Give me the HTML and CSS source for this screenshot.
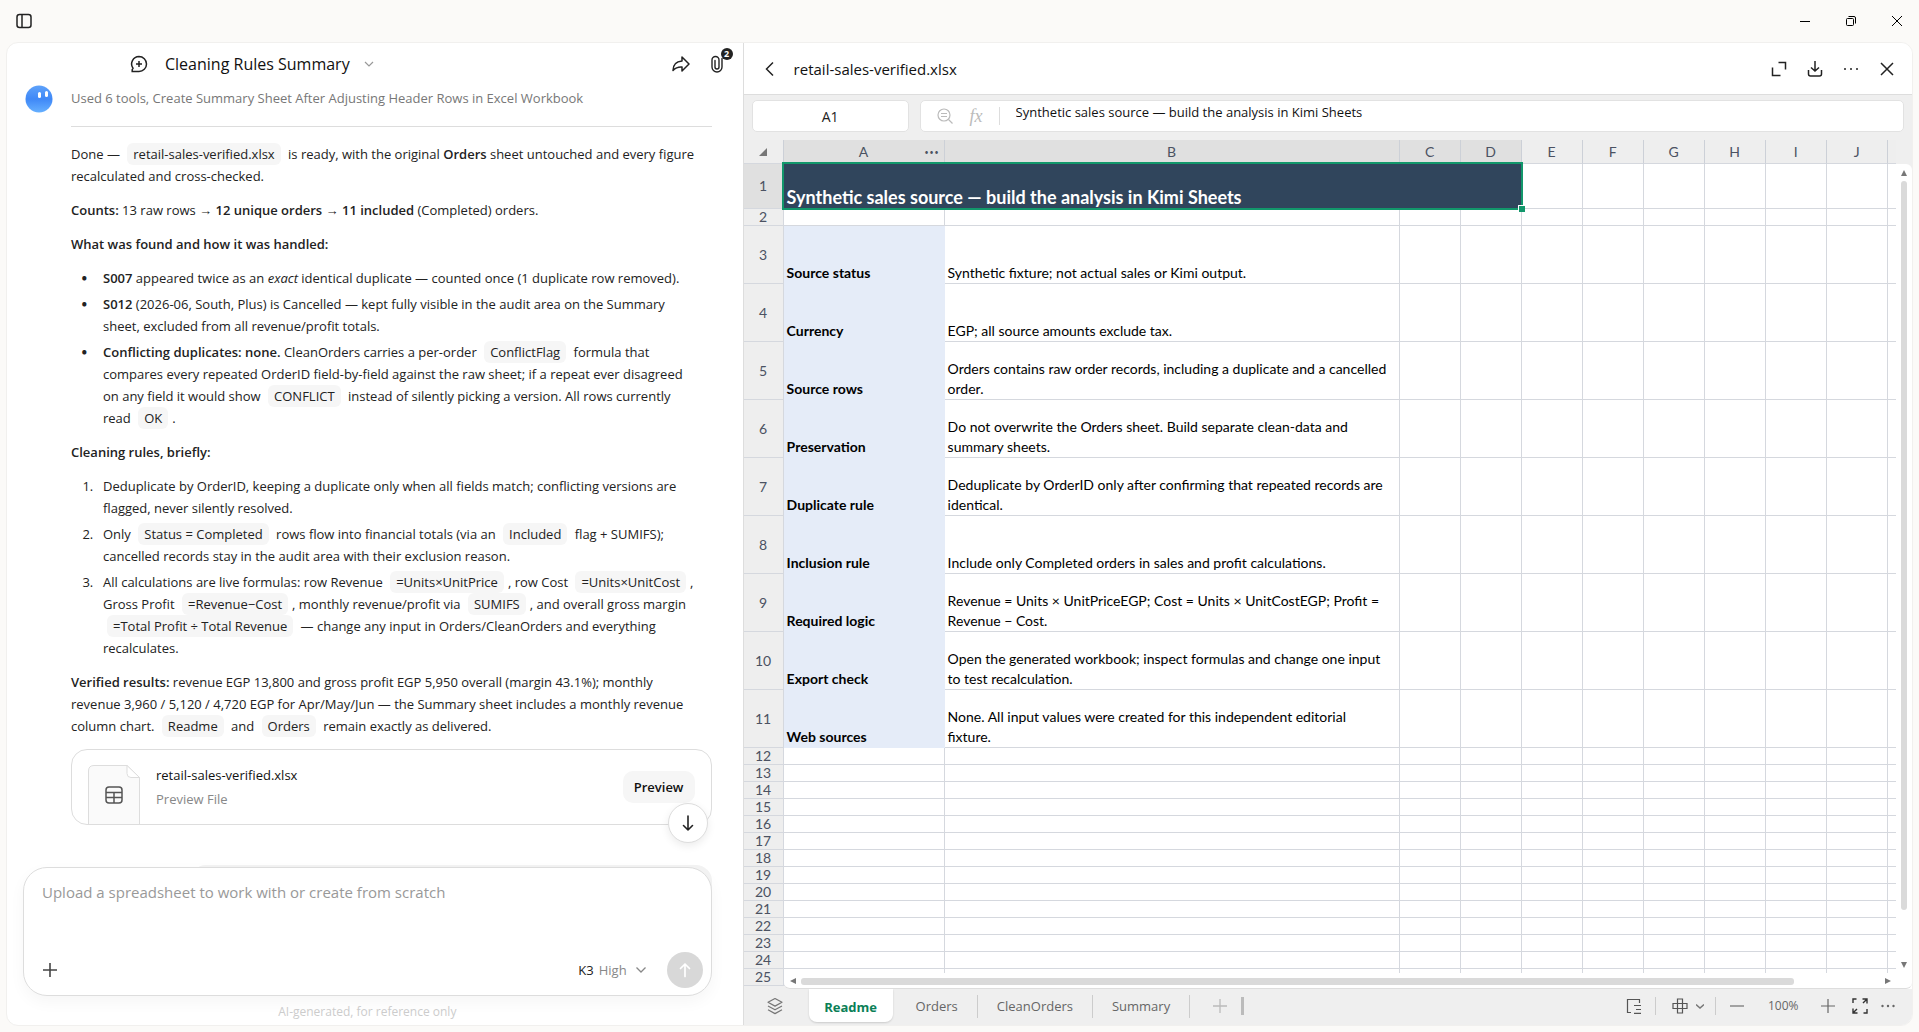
FILE: index.html
```html
<!DOCTYPE html>
<html lang="en">
<head>
<meta charset="utf-8">
<title>Cleaning Rules Summary</title>
<link rel="stylesheet" href="styles.css">
</head>
<body>
<div class="window">
  <header class="titlebar">
    <button class="icon-btn sidebar-toggle" aria-label="Toggle sidebar">
      <svg width="16" height="16" viewBox="0 0 16 16" fill="none" stroke="#222" stroke-width="1.5"><rect x="1" y="1.5" width="14" height="13" rx="2.5"/><path d="M6 1.5v13"/></svg>
    </button>
    <div class="window-controls">
      <button class="icon-btn" aria-label="Minimize"><svg width="10" height="10" viewBox="0 0 10 10" stroke="#000"><path d="M0 5.5h10"/></svg></button>
      <button class="icon-btn" aria-label="Restore"><svg width="10" height="10" viewBox="0 0 10 10" fill="none" stroke="#000"><rect x=".5" y="2.5" width="7" height="7" rx="1"/><path d="M2.5 .5H8q1.500 0 1.500 1.500v5.500"/></svg></button>
      <button class="icon-btn" aria-label="Close"><svg width="10" height="10" viewBox="0 0 10 10" stroke="#000"><path d="M0 0l10 10M10 0L0 10"/></svg></button>
    </div>
  </header>

  <div class="panes">
    <main class="chat">
      <header class="chat-header">
        <button class="icon-btn" aria-label="New chat"><svg width="18" height="18" viewBox="0 0 18 18" fill="none" stroke="#222" stroke-width="1.500"><path d="M9 1.500a7.500 7.500 0 1 1 0 15H2.200v-1.800l.8-1.400A7.500 7.500 0 0 1 9 1.500zM9 6v6M6 9h6"/></svg></button>
        <button class="chat-title">Cleaning Rules Summary
          <svg width="10" height="10" viewBox="0 0 10 10" fill="none" stroke="#999" stroke-width="1.200"><path d="M1 3l4 4 4-4"/></svg></button>
        <div class="chat-actions">
          <button class="icon-btn" aria-label="Share"><svg width="18" height="18" viewBox="0 0 18 18" fill="none" stroke="#222" stroke-width="1.500" stroke-linejoin="round"><path d="M10 2l7 7-7 7v-4c-4-.3-6.500.8-9 3.500C1 10 4.500 6.500 10 6z"/></svg></button>
          <button class="icon-btn clip" aria-label="Attachments"><svg width="12" height="18" viewBox="0 0 12 18" fill="none" stroke="#222" stroke-width="1.400" stroke-linecap="round"><path d="M11 5v7a5 5 0 0 1-10 0V5a3.500 3.500 0 0 1 7 0v7a2 2 0 0 1-4 0V5.500M11 5V3.500"/></svg><span class="badge">2</span></button>
        </div>
      </header>

      <section class="messages">
        <div class="turn">
          <div class="avatar"><svg width="28" height="28" viewBox="0 0 28 28"><defs><linearGradient id="face" x1="0" y1="0" x2="0" y2="1"><stop offset="0" stop-color="#5ea2fa"/><stop offset=".5" stop-color="#3f88f7"/><stop offset="1" stop-color="#66b0ff"/></linearGradient></defs><circle cx="14" cy="14" r="13.500" fill="url(#face)"/><rect x="13" y="7" width="3" height="6" rx="1.500" fill="#fff"/><rect x="20" y="6" width="3" height="6" rx="1.500" fill="#fff"/></svg></div>
          <article class="answer">
            <div class="tools">Used 6 tools, Create Summary Sheet After Adjusting Header Rows in Excel Workbook</div>
            <hr>
            <p>Done — <code>retail-sales-verified.xlsx</code> is ready, with the original <b>Orders</b> sheet untouched and every figure recalculated and cross-checked.</p>
            <p><b>Counts:</b> 13 raw rows → <b>12 unique orders</b> → <b>11 included</b> (Completed) orders.</p>
            <p><b>What was found and how it was handled:</b></p>
            <ul>
              <li><b>S007</b> appeared twice as an <em>exact</em> identical duplicate — counted once (1 duplicate row removed).</li>
              <li><b>S012</b> (2026-06, South, Plus) is Cancelled — kept fully visible in the audit area on the Summary sheet, excluded from all revenue/profit totals.</li>
              <li><b>Conflicting duplicates: none.</b> CleanOrders carries a per-order <code>ConflictFlag</code> formula that compares every repeated OrderID field-by-field against the raw sheet; if a repeat ever disagreed on any field it would show <code>CONFLICT</code> instead of silently picking a version. All rows currently read <code>OK</code>.</li>
            </ul>
            <p><b>Cleaning rules, briefly:</b></p>
            <ol>
              <li>Deduplicate by OrderID, keeping a duplicate only when all fields match; conflicting versions are flagged, never silently resolved.</li>
              <li>Only <code>Status = Completed</code> rows flow into financial totals (via an <code>Included</code> flag + SUMIFS); cancelled records stay in the audit area with their exclusion reason.</li>
              <li>All calculations are live formulas: row Revenue <code>=Units×UnitPrice</code>, row Cost <code>=Units×UnitCost</code>, Gross Profit <code>=Revenue−Cost</code>, monthly revenue/profit via <code>SUMIFS</code>, and overall gross margin <code>=Total Profit ÷ Total Revenue</code> — change any input in Orders/CleanOrders and everything recalculates.</li>
            </ol>
            <p><b>Verified results:</b> revenue EGP 13,800 and gross profit EGP 5,950 overall (margin 43.1%); monthly revenue 3,960 / 5,120 / 4,720 EGP for Apr/May/Jun — the Summary sheet includes a monthly revenue column chart. <code>Readme</code> and <code>Orders</code> remain exactly as delivered.</p>
            <div class="file-card">
              <div class="file-thumb"><svg width="52" height="60" viewBox="0 0 52 60" fill="none"><path d="M.5 61V6Q.5.500 6 .5h33l12.500 12V61z" fill="#fafafa" stroke="#ddd"/><path d="M39 .5v8q0 4 4 4h8.500z" fill="#fff" stroke="#ddd"/><g stroke="#555" stroke-width="1.500"><rect x="18" y="22" width="16" height="16" rx="3"/><path d="M18 27.500h16M18 32.500h16M26 27.500V38"/></g></svg></div>
              <div class="file-text"><div class="file-name">retail-sales-verified.xlsx</div><div class="file-sub">Preview File</div></div>
              <button class="preview">Preview</button>
            </div>
          </article>
        </div>
        <div class="user-bubble"></div>
      </section>

      <footer class="composer-area">
        <button class="scroll-down" aria-label="Scroll to bottom"><svg width="16" height="18" viewBox="0 0 16 18" fill="none" stroke="#222" stroke-width="1.600" stroke-linecap="round" stroke-linejoin="round"><path d="M8 2v14M3.500 11.500L8 16l4.500-4.500"/></svg></button>
        <form class="composer">
          <textarea aria-label="Message" placeholder="Upload a spreadsheet to work with or create from scratch"></textarea>
          <div class="composer-tools">
            <button type="button" class="icon-btn" aria-label="Add"><svg width="16" height="16" viewBox="0 0 16 16" stroke="#444" stroke-width="1.600"><path d="M8 1v14M1 8h14"/></svg></button>
            <button type="button" class="model">K3 <span>High</span>
              <svg width="12" height="12" viewBox="0 0 12 12" fill="none" stroke="#888" stroke-width="1.300"><path d="M1.500 3.500L6 8l4.500-4.500"/></svg></button>
            <button type="button" class="send" aria-label="Send"><svg width="16" height="16" viewBox="0 0 16 16" fill="none" stroke="#fff" stroke-width="1.700" stroke-linecap="round" stroke-linejoin="round"><path d="M8 14.500V2M3.500 6.500L8 2l4.500 4.500"/></svg></button>
          </div>
        </form>
        <p class="disclaimer">AI-generated, for reference only</p>
      </footer>
    </main>

    <section class="sheet">
      <header class="sheet-header">
        <button class="icon-btn" aria-label="Back"><svg width="16" height="16" viewBox="0 0 16 16" fill="none" stroke="#222" stroke-width="1.500"><path d="M11 1.500L4.500 8l6.500 6.500"/></svg></button>
        <h1>retail-sales-verified.xlsx</h1>
        <div class="sheet-actions">
          <button class="icon-btn" aria-label="Expand"><svg width="16" height="16" viewBox="0 0 16 16" fill="none" stroke="#222" stroke-width="1.500"><path d="M7.500 1.500h7v7M1.500 6.500v8h8"/></svg></button>
          <button class="icon-btn" aria-label="Download"><svg width="16" height="16" viewBox="0 0 16 16" fill="none" stroke="#222" stroke-width="1.500"><path d="M8 0v10M4 6.500L8 10l4-3.500M1.500 9v4q0 2 2 2h9q2 0 2-2V9"/></svg></button>
          <button class="icon-btn" aria-label="More"><svg width="16" height="16" viewBox="0 0 16 16" fill="#222"><circle cx="2" cy="8" r="1"/><circle cx="8" cy="8" r="1"/><circle cx="14" cy="8" r="1"/></svg></button>
          <button class="icon-btn" aria-label="Close"><svg width="16" height="16" viewBox="0 0 16 16" stroke="#222" stroke-width="1.500"><path d="M2 2l12 12M14 2L2 14"/></svg></button>
        </div>
      </header>

      <div class="formula-row">
        <input class="name-box" aria-label="Cell" value="A1">
        <div class="formula-box">
          <svg width="16" height="16" viewBox="0 0 16 16" fill="none" stroke="#bbb" stroke-width="1.200"><circle cx="7" cy="7" r="6"/><path d="M4 5.500h6M4 8.500h6M11.500 11.500L15.500 15.500"/></svg>
          <i class="fx">fx</i>
          <input aria-label="Formula" value="Synthetic sales source — build the analysis in Kimi Sheets">
        </div>
      </div>

      <div class="grid">
        <table>
          <colgroup><col class="c-num"><col class="c-a"><col class="c-b"><col class="c-std"><col class="c-std"><col class="c-std"><col class="c-std"><col class="c-std"><col class="c-std"><col class="c-std"><col class="c-std"><col></colgroup>
          <thead><tr><th class="corner"><svg width="8" height="8" viewBox="0 0 8 8" fill="#777"><path d="M8 0v8H0z"/></svg></th><th class="on col-a">A<span class="col-more">•••</span></th><th class="on">B</th><th class="on">C</th><th class="on">D</th><th>E</th><th>F</th><th>G</th><th>H</th><th>I</th><th>J</th><th></th></tr></thead>
          <tbody>
            <tr class="title-row"><th class="on">1</th><td class="banner" colspan="4">Synthetic sales source — build the analysis in Kimi Sheets<span class="selection"></span></td><td></td><td></td><td></td><td></td><td></td><td></td><td></td></tr>
            <tr><th>2</th><td></td><td></td><td></td><td></td><td></td><td></td><td></td><td></td><td></td><td></td><td></td></tr>
            <tr class="tall"><th>3</th><td class="key">Source status</td><td>Synthetic fixture; not actual sales or Kimi output.</td><td></td><td></td><td></td><td></td><td></td><td></td><td></td><td></td><td></td></tr>
            <tr class="tall"><th>4</th><td class="key">Currency</td><td>EGP; all source amounts exclude tax.</td><td></td><td></td><td></td><td></td><td></td><td></td><td></td><td></td><td></td></tr>
            <tr class="tall"><th>5</th><td class="key">Source rows</td><td>Orders contains raw order records, including a duplicate and a cancelled order.</td><td></td><td></td><td></td><td></td><td></td><td></td><td></td><td></td><td></td></tr>
            <tr class="tall"><th>6</th><td class="key">Preservation</td><td>Do not overwrite the Orders sheet. Build separate clean-data and summary sheets.</td><td></td><td></td><td></td><td></td><td></td><td></td><td></td><td></td><td></td></tr>
            <tr class="tall"><th>7</th><td class="key">Duplicate rule</td><td>Deduplicate by OrderID only after confirming that repeated records are identical.</td><td></td><td></td><td></td><td></td><td></td><td></td><td></td><td></td><td></td></tr>
            <tr class="tall"><th>8</th><td class="key">Inclusion rule</td><td>Include only Completed orders in sales and profit calculations.</td><td></td><td></td><td></td><td></td><td></td><td></td><td></td><td></td><td></td></tr>
            <tr class="tall"><th>9</th><td class="key">Required logic</td><td>Revenue = Units × UnitPriceEGP; Cost = Units × UnitCostEGP; Profit = Revenue − Cost.</td><td></td><td></td><td></td><td></td><td></td><td></td><td></td><td></td><td></td></tr>
            <tr class="tall"><th>10</th><td class="key">Export check</td><td>Open the generated workbook; inspect formulas and change one input to test recalculation.</td><td></td><td></td><td></td><td></td><td></td><td></td><td></td><td></td><td></td></tr>
            <tr class="tall"><th>11</th><td class="key">Web sources</td><td>None. All input values were created for this independent editorial fixture.</td><td></td><td></td><td></td><td></td><td></td><td></td><td></td><td></td><td></td></tr>
            <tr><th>12</th><td></td><td></td><td></td><td></td><td></td><td></td><td></td><td></td><td></td><td></td><td></td></tr>
            <tr><th>13</th><td></td><td></td><td></td><td></td><td></td><td></td><td></td><td></td><td></td><td></td><td></td></tr>
            <tr><th>14</th><td></td><td></td><td></td><td></td><td></td><td></td><td></td><td></td><td></td><td></td><td></td></tr>
            <tr><th>15</th><td></td><td></td><td></td><td></td><td></td><td></td><td></td><td></td><td></td><td></td><td></td></tr>
            <tr><th>16</th><td></td><td></td><td></td><td></td><td></td><td></td><td></td><td></td><td></td><td></td><td></td></tr>
            <tr><th>17</th><td></td><td></td><td></td><td></td><td></td><td></td><td></td><td></td><td></td><td></td><td></td></tr>
            <tr><th>18</th><td></td><td></td><td></td><td></td><td></td><td></td><td></td><td></td><td></td><td></td><td></td></tr>
            <tr><th>19</th><td></td><td></td><td></td><td></td><td></td><td></td><td></td><td></td><td></td><td></td><td></td></tr>
            <tr><th>20</th><td></td><td></td><td></td><td></td><td></td><td></td><td></td><td></td><td></td><td></td><td></td></tr>
            <tr><th>21</th><td></td><td></td><td></td><td></td><td></td><td></td><td></td><td></td><td></td><td></td><td></td></tr>
            <tr><th>22</th><td></td><td></td><td></td><td></td><td></td><td></td><td></td><td></td><td></td><td></td><td></td></tr>
            <tr><th>23</th><td></td><td></td><td></td><td></td><td></td><td></td><td></td><td></td><td></td><td></td><td></td></tr>
            <tr><th>24</th><td></td><td></td><td></td><td></td><td></td><td></td><td></td><td></td><td></td><td></td><td></td></tr>
            <tr><th>25</th><td></td><td></td><td></td><td></td><td></td><td></td><td></td><td></td><td></td><td></td><td></td></tr>
          </tbody>
        </table>
        <div class="vbar"><svg width="6" height="6" viewBox="0 0 6 6" fill="#777"><path d="M3 0l3 6H0z"/></svg><div class="vtrack"><div class="thumb"></div></div><svg width="6" height="6" viewBox="0 0 6 6" fill="#777"><path d="M3 6L0 0h6z"/></svg></div>
        <div class="hbar"><svg width="6" height="6" viewBox="0 0 6 6" fill="#777"><path d="M0 3l6-3v6z"/></svg><div class="htrack"><div class="thumb"></div></div><svg width="6" height="6" viewBox="0 0 6 6" fill="#777"><path d="M6 3L0 0v6z"/></svg></div>
      </div>

      <footer class="tabbar">
        <button class="icon-btn layers" aria-label="All sheets"><svg width="16" height="18" viewBox="0 0 16 18" fill="none" stroke="#777" stroke-width="1.200" stroke-linejoin="round"><path d="M8 1.500l7 3.800-7 3.800-7-3.800zM1 9l7 3.800L15 9M1 12.800l7 3.800 7-3.800"/></svg></button>
        <button class="tab active">Readme</button>
        <button class="tab">Orders</button>
        <button class="tab">CleanOrders</button>
        <button class="tab">Summary</button>
        <button class="icon-btn add" aria-label="Add sheet"><svg width="14" height="14" viewBox="0 0 14 14" stroke="#bbb" stroke-width="1.300"><path d="M7 0v14M0 7h14"/></svg></button>
        <span class="grip"></span>
        <div class="view-tools">
          <button class="icon-btn outline" aria-label="Outline"><svg width="16" height="16" viewBox="0 0 16 16" fill="none" stroke="#555" stroke-width="1.200"><path d="M5 14.500H1.500v-13h12V5M8 7.500h7M10 11.500h5M8 15.400h7"/></svg></button>
          <span class="rule"></span>
          <button class="icon-btn cells" aria-label="Cell focus"><svg width="16" height="16" viewBox="0 0 16 16" fill="none" stroke="#555" stroke-width="1.200"><path d="M5.500 1h5v14h-5zM1 5.500h14v5H1z"/></svg><svg width="8" height="8" viewBox="0 0 8 8" fill="none" stroke="#777" stroke-width="1.500"><path d="M0 2.500l4 3.500 4-3.500"/></svg></button>
          <span class="rule"></span>
          <button class="icon-btn minus" aria-label="Zoom out"><svg width="14" height="14" viewBox="0 0 14 14" stroke="#888" stroke-width="1.500"><path d="M0 7h14"/></svg></button>
          <span class="zoom">100%</span>
          <button class="icon-btn plus" aria-label="Zoom in"><svg width="14" height="14" viewBox="0 0 14 14" stroke="#666" stroke-width="1.200"><path d="M7 0v14M0 7h14"/></svg></button>
          <button class="icon-btn full" aria-label="Full screen"><svg width="16" height="16" viewBox="0 0 16 16" fill="none" stroke="#333" stroke-width="1.400"><path d="M1 5V1h3.500M11.500 15H15v-4M10.500 1H15v4.500M14.800 1.200L11 5M5.500 15H1v-4.500M1.200 14.800L5 11"/></svg></button>
          <button class="icon-btn" aria-label="More"><svg width="14" height="14" viewBox="0 0 14 14" fill="#666"><circle cx="1.500" cy="7" r="1.200"/><circle cx="7" cy="7" r="1.200"/><circle cx="12.500" cy="7" r="1.200"/></svg></button>
        </div>
      </footer>
    </section>
  </div>
</div>
</body>
</html>
```
FILE: styles.css
```css
* { box-sizing: border-box; }

body {
  margin: 0;
  background: #fbfaf8;
  color: #222;
  font: 13px/22px "Open Sans", "Noto Sans", sans-serif;
}

button, input, textarea { font: inherit; color: inherit; }
button { border: 0; padding: 0; background: none; cursor: pointer; }
svg { display: block; flex: none; }

.icon-btn { display: flex; align-items: center; justify-content: center; flex: none; }

.window { height: 100vh; display: flex; flex-direction: column; padding: 0 6px 6px; }

.titlebar { height: 42px; flex: none; display: flex; align-items: center; justify-content: space-between; }
.sidebar-toggle { margin-left: 10px; }
.window-controls { display: flex; margin-right: -7px; }
.window-controls .icon-btn { width: 46px; height: 32px; }

.panes {
  flex: 1;
  min-height: 0;
  display: grid;
  grid-template-columns: minmax(0, 736fr) minmax(0, 1170fr);
  border: 1px solid #f1f0ee;
  border-radius: 12px;
  background: #fff;
  overflow: hidden;
}

/* Chat pane */
.chat { display: flex; flex-direction: column; min-height: 0; }

.chat-header { height: 42px; flex: none; display: flex; align-items: center; padding: 0 20px 0 123px; }
.chat-title { display: flex; align-items: center; gap: 14px; margin-left: 17px; font-size: 16px; color: #111; }
.chat-actions { display: flex; gap: 21px; margin-left: auto; }
.clip { position: relative; }
.badge {
  position: absolute; top: -7px; right: -10px;
  width: 12px; height: 12px; border-radius: 6px;
  background: #222; color: #fff; font-size: 9px; font-weight: 700; line-height: 12px;
}

.messages { flex: 1; min-height: 0; overflow: hidden; padding: 0 31px 0 18px; }
.turn { display: flex; gap: 18px; }
.avatar { flex: none; width: 28px; height: 28px; }
.answer { flex: 1; min-width: 0; }
.tools { line-height: 26px; color: #777; }
.answer hr { border: 0; border-top: 1px solid #ddd; margin: 15px 0 16px; }
.answer p, .answer ul, .answer ol { margin: 0 0 12px; padding-right: 12px; }
.answer ul, .answer ol { padding-left: 32px; }
.answer li + li { margin-top: 4px; }
.answer ul li::marker { content: "•\2003\2005"; font-weight: 800; }
.answer ol li::marker { content: counter(list-item) ".\2002\2005"; }
.answer b { font-weight: 600; }
.answer code { font: inherit; background: #f6f6f6; border-radius: 6px; padding: 2px 6px; margin: 0 4px; }

.file-card {
  display: flex;
  height: 76px;
  padding: 15px 16px 0;
  border: 1px solid #ddd;
  border-radius: 16px;
  overflow: hidden;
}
.file-text { margin-left: 16px; line-height: 24px; }
.file-name { color: #111; margin-top: -2px; }
.file-sub { color: #888; }
.preview { width: 72px; height: 32px; margin: 6px 0 0 auto; border-radius: 10px; background: #f6f6f6; color: #111; font-weight: 600; }

.user-bubble { width: 76%; height: 40px; margin: 40px 0 0 auto; border-radius: 16px; background: #f3f3f3; }

.composer-area { flex: none; position: relative; margin-top: -24px; padding: 0 31px 0 16px; }
.composer {
  display: flex; flex-direction: column;
  padding: 12px 8px 7px 18px;
  border: 1px solid #ddd;
  border-radius: 24px;
  background: #fff;
  box-shadow: 0 6px 16px rgba(0, 0, 0, .04);
}
.composer textarea { height: 72px; padding: 0; border: 0; outline: 0; resize: none; background: none; font-size: 15px; line-height: 24px; }
.composer textarea::placeholder { color: #999; }
.composer-tools { display: flex; align-items: center; height: 36px; }
.model { display: flex; align-items: center; gap: 5px; margin-left: auto; }
.model span { color: #888; }
.model svg { margin-left: 3px; }
.send { display: flex; align-items: center; justify-content: center; width: 36px; height: 36px; margin-left: 20px; border-radius: 18px; background: #d8d8d8; }
.disclaimer { margin: 6px 0 3px; text-align: center; font-size: 12px; line-height: 20px; color: #ccc; }
.scroll-down {
  position: absolute; top: -64px; right: 35px;
  display: flex; align-items: center; justify-content: center;
  width: 40px; height: 40px;
  border: 1px solid #ddd; border-radius: 20px;
  background: #fff;
  box-shadow: 0 3px 8px rgba(0, 0, 0, .08);
}

/* Spreadsheet pane */
.sheet { display: flex; flex-direction: column; min-height: 0; border-left: 1px solid #ddd; background: #efefef; }

.sheet-header { height: 52px; flex: none; display: flex; align-items: center; padding: 0 17px 0 18px; border-bottom: 1px solid #ddd; background: #fff; }
.sheet-header h1 { margin: 0 0 0 16px; font-size: 15px; font-weight: 400; color: #111; }
.sheet-actions { display: flex; gap: 20px; margin-left: auto; }

.formula-row { display: flex; gap: 11px; padding: 5px 8px 8px; }
.name-box, .formula-box { height: 32px; border: 1px solid #e2e2e2; border-radius: 5px; background: #fff; }
.name-box { width: 157px; padding: 0; text-align: center; font-size: 14px; outline: 0; }
.formula-box { flex: 1; display: flex; align-items: center; padding-left: 16px; }
.fx { margin-left: 17px; padding-right: 16px; border-right: 1px solid #ddd; font: italic 18px/18px "Liberation Serif", serif; color: #bbb; }
.formula-box input { flex: 1; height: 22px; margin: 0 0 8px 16px; padding: 0; border: 0; outline: 0; background: none; font-size: 13px; color: #111; }

.grid { flex: 1; min-height: 0; position: relative; overflow: hidden; }
.grid table { width: calc(100% - 16px); table-layout: fixed; border-collapse: separate; border-spacing: 0; }
.c-num { width: 40px; }
.c-a { width: 161px; }
.c-b { width: 455px; }
.c-std { width: 61px; }
.grid th, .grid td { height: 17px; padding: 0; border: solid #d5d8de; border-width: 0 1px 1px 0; }
.grid th { background: #eee; color: #4b5262; font: 14px/16px Lato, sans-serif; }
.grid thead th { height: 24px; border-right-color: #ccd0d7; }
.grid th:last-child, .grid td:last-child { border-right: 0; }
.grid th.on { background: #e0e0e0; }
.grid td { padding: 0 8px 0 3px; background: #fff; color: #000; font: 14px/20px Lato, sans-serif; vertical-align: bottom; }
.grid td:empty { padding: 0; line-height: 0; }
.grid .title-row th { height: 45px; }
.grid .tall th { height: 58px; }
.corner svg { margin: 0 auto; }
.col-a { position: relative; }
.col-more { position: absolute; right: 4px; font-size: 7px; letter-spacing: 1px; }
.grid .key { background: #e5ecf8; border-color: #e5ecf8; font-weight: 700; }
.grid .banner { position: relative; background: #30455c; color: #fff; font-size: 18px; font-weight: 700; line-height: 22px; }
.selection { position: absolute; inset: -2px; border: 2px solid #12976b; }
.selection::after { content: ""; position: absolute; right: -4px; bottom: -4px; width: 6px; height: 6px; border: solid #fff; border-width: 1px 0 0 1px; background: #12976b; }

.vbar, .hbar { position: absolute; display: flex; align-items: center; background: #fff; }
.vbar { top: 24px; right: 0; bottom: 0; width: 16px; flex-direction: column; padding: 6px 0 21px; border-radius: 0 6px 0 0; }
.hbar { left: 40px; right: 0; bottom: 0; height: 16px; padding: 0 21px 0 6px; border-bottom: 1px solid #ddd; border-radius: 0 0 6px 6px; }
.vtrack { flex: 1; width: 6px; margin: 5px 0; }
.htrack { flex: 1; height: 6px; margin: 0 5px; }
.thumb { border-radius: 3px; background: #dadada; }
.vtrack .thumb { height: 94%; }
.htrack .thumb { width: 92%; height: 7px; }

.tabbar { height: 36px; flex: none; display: flex; align-items: center; padding: 0 17px 2px 23px; color: #666; }
.tab { display: flex; align-items: center; justify-content: center; height: 23px; padding: 0 19px; border-right: 1px solid #ccc; }
.tab.active { width: 84px; height: 33px; margin: 0 4px 1px 26px; padding: 2px 0 0; border: 0; border-radius: 0 0 8px 8px; background: #fff; color: #0b7f57; font-weight: 700; box-shadow: 0 1px 2px rgba(0, 0, 0, .15); }
.add { margin-left: 23px; }
.grip { width: 3px; height: 18px; margin-left: 14px; background: #bbb; }
.view-tools { display: flex; align-items: center; margin-left: auto; }
.rule { width: 1px; height: 18px; background: #ccc; }
.outline { margin-right: 13px; }
.cells { gap: 8px; margin: 0 11px 0 16px; }
.minus { margin-left: 14px; }
.zoom { width: 32px; margin: 0 21px 0 24px; font-size: 12px; }
.full { margin: 0 13px 0 17px; }
```
